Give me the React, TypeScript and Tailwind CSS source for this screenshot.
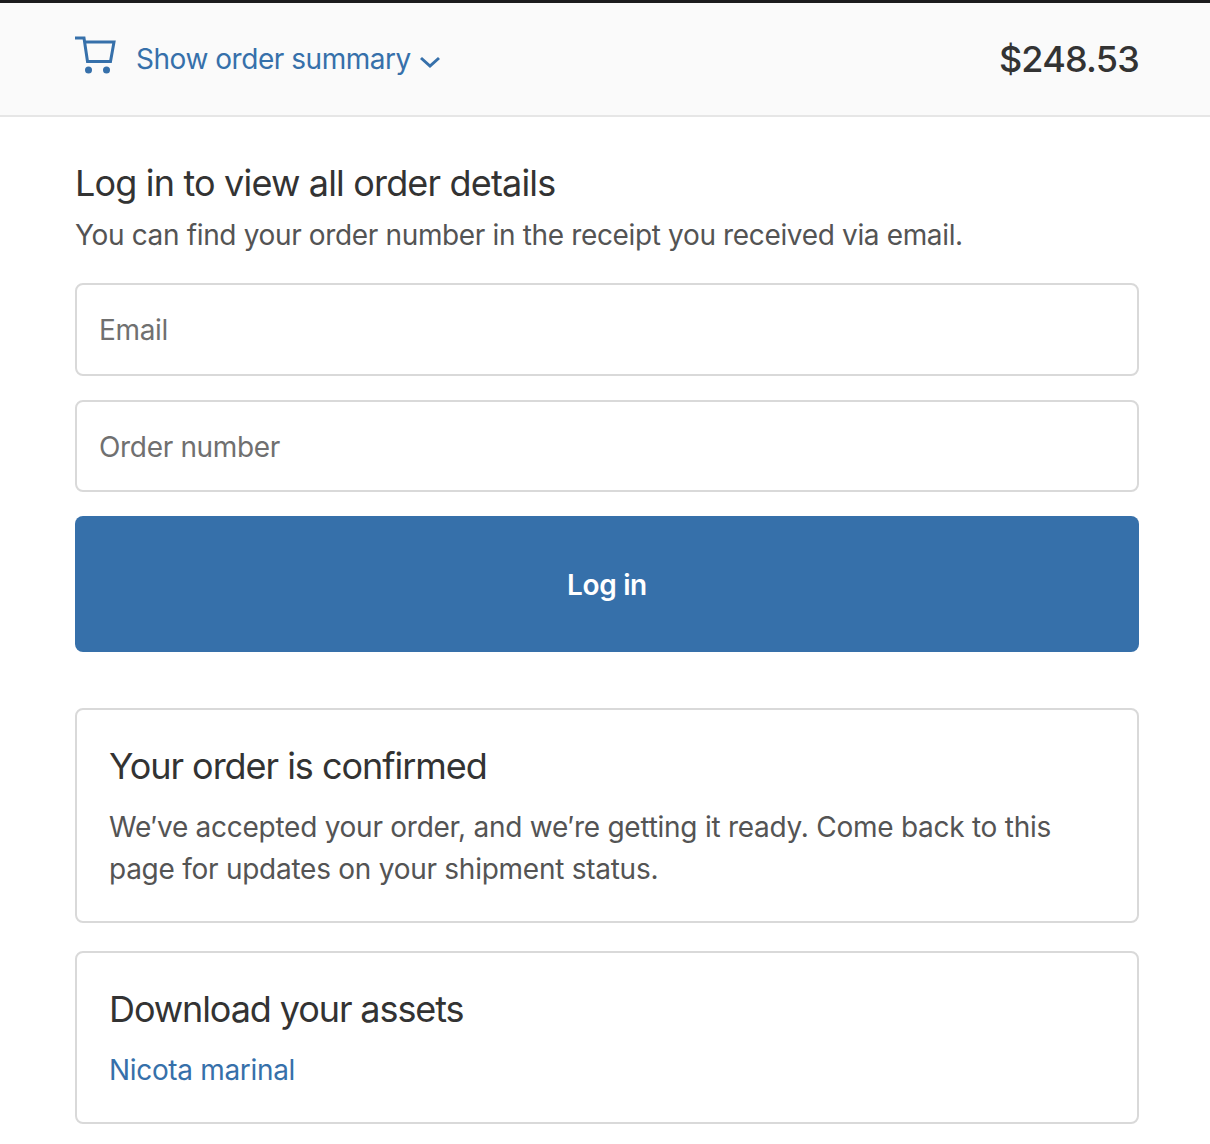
const font = { fontFamily: 'Inter, "Liberation Sans", sans-serif' };

function CartIcon() {
  return (
    <svg width="42" height="40" viewBox="0 0 42 40" fill="none" className="-mt-[8px] text-[#3670aa]">
      <path d="M0 3h9l3.500 23.500h23L39 7H9.500" stroke="currentColor" strokeWidth="3" />
      <circle cx="13.500" cy="35" r="3.500" fill="currentColor" />
      <circle cx="31.500" cy="35" r="3.500" fill="currentColor" />
    </svg>
  );
}

function Field({ label, className }: { label: string; className: string }) {
  return (
    <div className={`flex items-center rounded-lg border-2 border-[#d9d9d9] bg-white px-[22px] text-[28px] tracking-[-0.33px] text-[#707070] ${className}`}>
      {label}
    </div>
  );
}

export default function App() {
  return (
    <div className="min-h-[1144px] overflow-hidden bg-white" style={font}>
      <header className="h-[117px] border-t-[3px] border-b-2 border-t-[#1c1c1e] border-b-[#e6e6e6] bg-[#fafafa]">
        <div className="flex h-full items-center justify-between pr-[71px] pl-[75px]">
          <div className="flex items-center text-[#3670aa]">
            <CartIcon />
            <span className="ml-[19px] text-[28px] tracking-[-0.46px]">Show order summary</span>
            <svg width="22" height="14" viewBox="0 0 22 14" fill="none" className="mt-[6px] ml-[8px]">
              <path d="M2 3l9 8 9-8" stroke="currentColor" strokeWidth="3" />
            </svg>
          </div>
          <div className="text-[36px] font-medium tracking-[-0.8px] text-[#333333]">$248.53</div>
        </div>
      </header>

      <main className="pr-[71px] pl-[75px]">
        <h1 className="mt-[42px] text-[36px] leading-[48px] tracking-[-0.83px] text-[#333333]">Log in to view all order details</h1>
        <p className="mt-[7px] text-[28px] leading-[42px] tracking-[-0.35px] text-[#545454]">You can find your order number in the receipt you received via email.</p>

        <div className="mt-[27px] flex flex-col gap-6">
          <Field label="Email" className="h-[93px]" />
          <Field label="Order number" className="h-[92px] pt-[2px]" />
          <button className="h-[136px] rounded-lg bg-[#3670aa] pt-[1px] text-[28px] font-semibold tracking-[-0.35px] text-white">Log in</button>
        </div>

        <section className="mt-[56px] h-[215px] rounded-lg border-2 border-[#d9d9d9] px-[32px] pt-[33px]">
          <h2 className="text-[36px] leading-[46px] tracking-[-1.03px] text-[#333333]">Your order is confirmed</h2>
          <p className="mt-[17px] text-[28px] leading-[42px] tracking-[-0.26px] text-[#545454]">
            We′ve accepted your order, and we′re getting it ready. Come back to this page for updates on your shipment status.
          </p>
        </section>

        <section className="mt-[28px] h-[173px] rounded-lg border-2 border-[#d9d9d9] px-[32px] pt-[33px]">
          <h2 className="text-[36px] leading-[46px] tracking-[-1.1px] text-[#333333]">Download your assets</h2>
          <a className="mt-[17px] block text-[28px] leading-[42px] tracking-[-0.33px] text-[#3670aa]">Nicota marinal</a>
        </section>
      </main>
    </div>
  );
}
